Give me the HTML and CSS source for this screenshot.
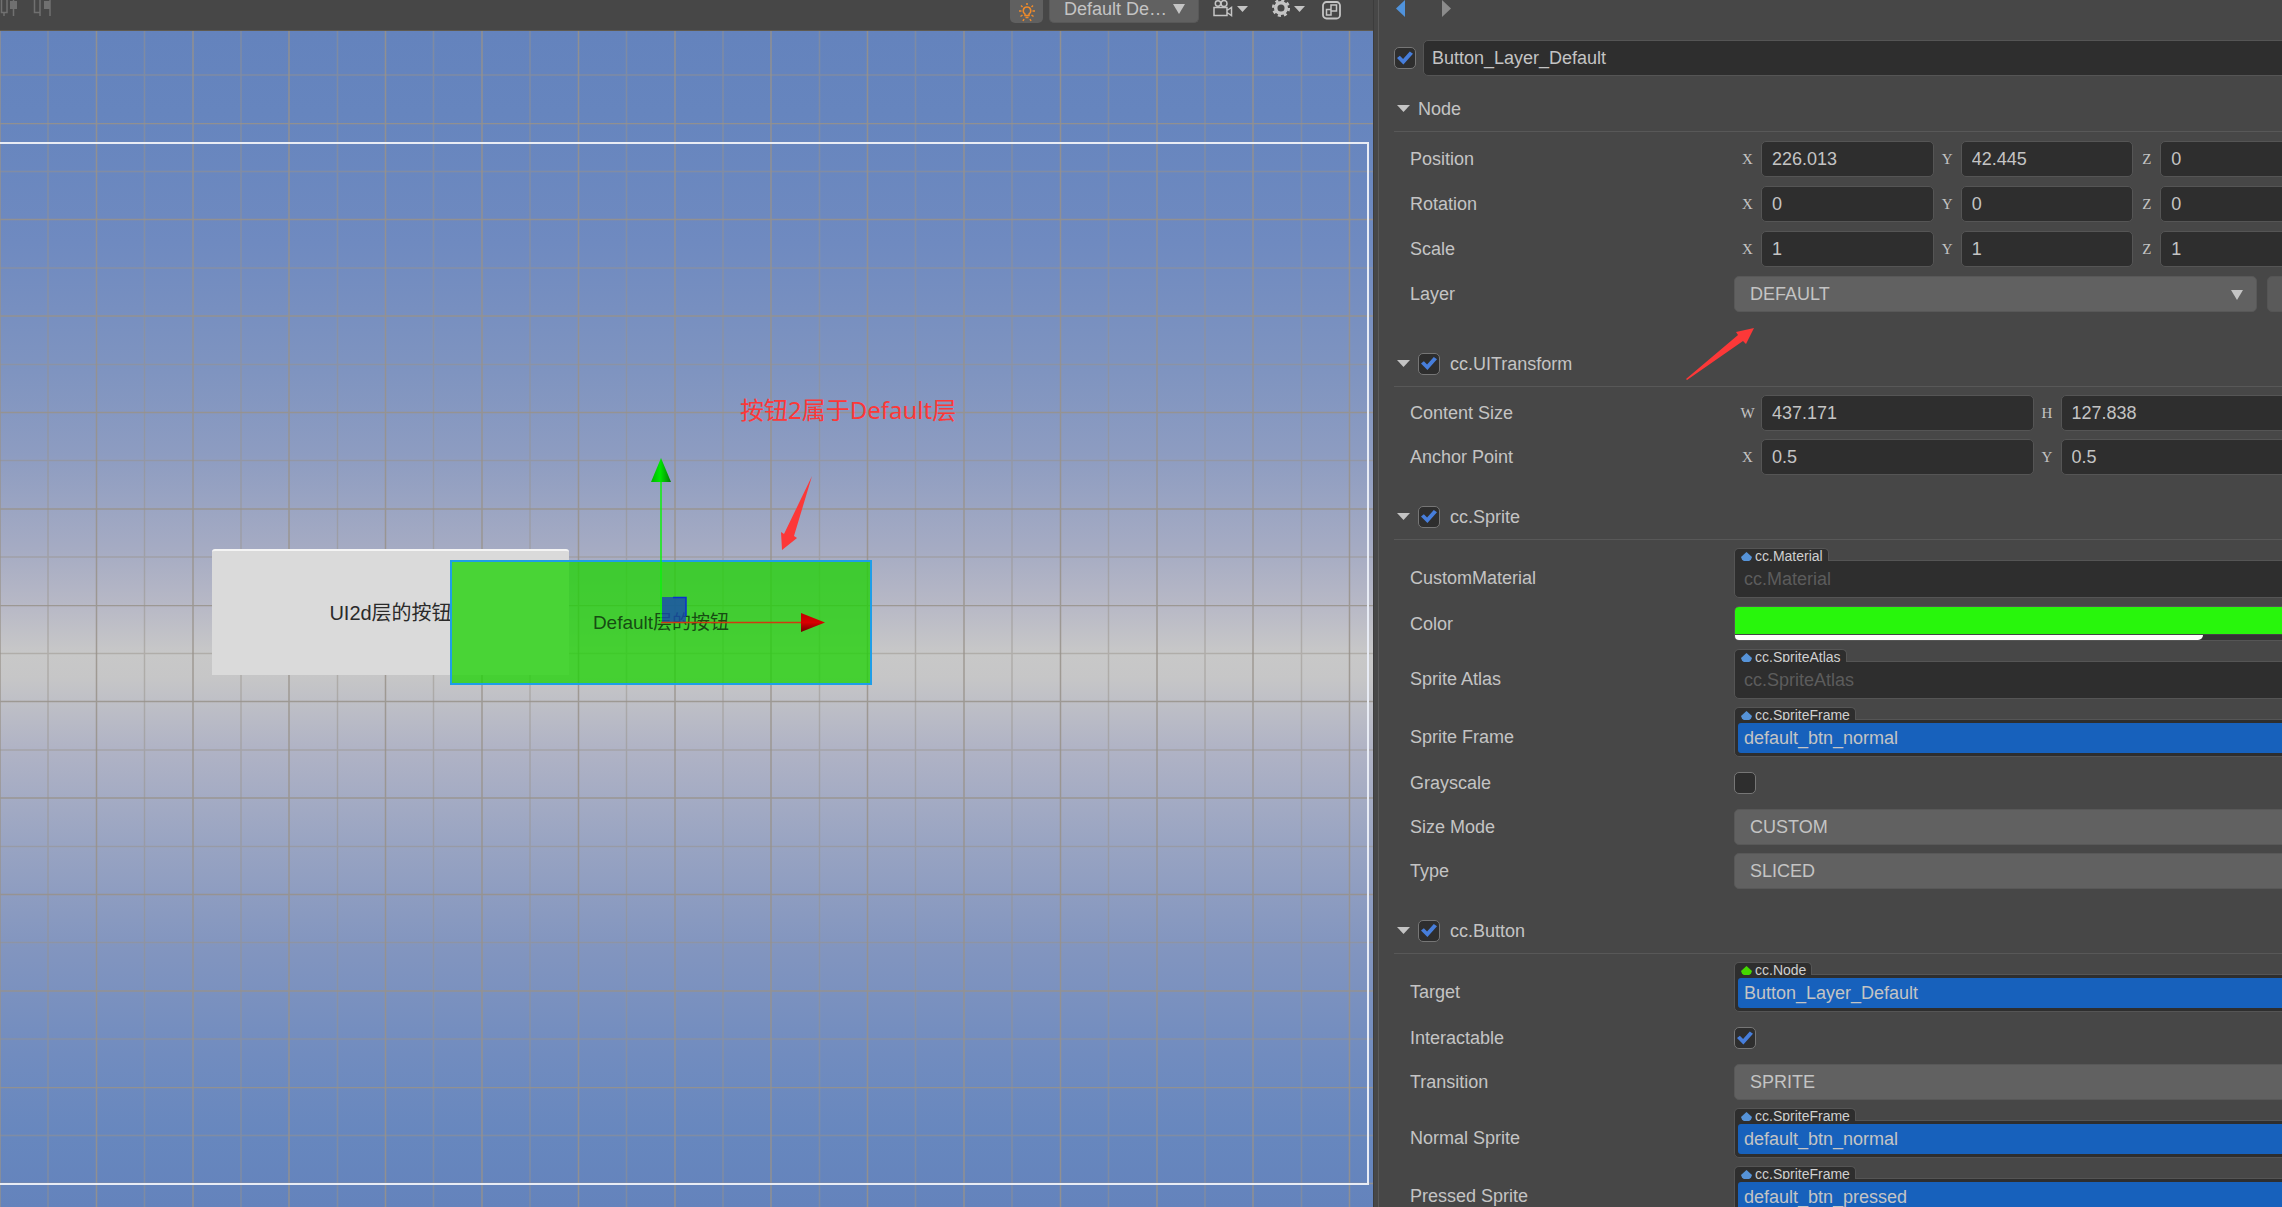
FILE: index.html
```html
<!DOCTYPE html>
<html lang="zh-CN">
<head>
<meta charset="utf-8">
<title>Scene Editor</title>
<link rel="stylesheet" href="styles.css">
</head>
<body>
<div class="app">
  <main class="scene">
    <div class="toolbar">
      <div class="tools">
        <button class="tool" aria-label="Align horizontal centers"><svg width="18" height="16"><path d="M1.500 0V12.500H7V0M4 12.500V16M13.500 0V16" fill="none" stroke="#707070" stroke-width="1.500"/><path d="M10 1h7v8h-7z" fill="#707070"/></svg></button>
        <button class="tool" aria-label="Align right"><svg width="18" height="16"><path d="M1.500 0V12.500H7M7 0V16M17 0V16" fill="none" stroke="#707070" stroke-width="1.500"/><path d="M11 1h6v8h-6z" fill="#707070"/></svg></button>
      </div>
      <div class="tools-right">
        <button class="tool light" aria-label="Scene light"><svg width="18" height="20" viewBox="0 0 18 20" fill="none" stroke="#ef8a2a" stroke-width="1.500"><path d="M7 13.500V12C4 10 5 5 9 5s5 5 2 7v1.500zM7.500 15.500h3M9 1v2M3 3.500l1.500 1.500M15 3.500L13.500 5M1 9h2.500M14.500 9H17M2.500 14.500L4.500 13M15.500 14.500l-2-1.500M6 17l-1 2M12 17l1 2"/></svg></button>
        <span class="drop drop-sm"><select class="select" aria-label="Design resolution"><option>Default De…</option></select></span>
        <button class="tool cam" aria-label="Camera"><svg width="20" height="17" fill="none" stroke="#c4c4c4" stroke-width="1.500"><circle cx="5" cy="3.500" r="2.700"/><circle cx="11" cy="3.500" r="3"/><path d="M1 7.500h13v8H1zM14 10.500l4.500-3v8l-4.500-3"/></svg><i class="caret"></i></button>
        <button class="tool gear" aria-label="Settings"><svg width="18" height="18"><circle cx="9" cy="8" r="5.300" fill="none" stroke="#c4c4c4" stroke-width="3.500"/><circle cx="9" cy="8" r="7.800" fill="none" stroke="#c4c4c4" stroke-width="2.500" stroke-dasharray="3.100 3.026"/></svg><i class="caret"></i></button>
        <button class="tool win" aria-label="Layout"><svg width="20" height="20" fill="none" stroke="#c4c4c4"><rect x="1" y="2" width="17" height="16.500" rx="3.500" stroke-width="1.800"/><path d="M9 5h5.500v6H9zM4.500 9.500H9v5.500H4.500z" stroke-width="1.500"/></svg></button>
      </div>
    </div>
    <div class="viewport">
      <svg class="grid" width="100%" height="100%">
        <defs>
          <pattern id="lines" y="92" width="482" height="482" patternUnits="userSpaceOnUse">
            <g fill="none" stroke="#98928a" stroke-width="1.500">
              <path stroke-opacity=".85" d="M0 0V482M482 0V482M96.500 0V482M193 0V482M289 0V482M385.500 0V482M0 .5H482M0 96.500H482M0 193H482M0 289.500H482M0 386H482"/>
              <path stroke-opacity=".5" d="M48 0V482M144.500 0V482M241 0V482M337.500 0V482M433.500 0V482M0 48.500H482M0 145H482M0 241.500H482M0 337.500H482M0 434H482"/>
            </g>
          </pattern>
        </defs>
        <rect width="100%" height="100%" fill="url(#lines)"/>
      </svg>
      <div class="canvas-frame"></div>
      <div class="node node-ui">UI2d层的按钮</div>
      <div class="node node-default"><span>Default层的按钮</span></div>
      <svg class="gizmo" width="180" height="180">
        <defs>
          <linearGradient id="gy"><stop offset="0" stop-color="#00b400"/><stop offset=".45" stop-color="#00e800"/><stop offset="1" stop-color="#067a06"/></linearGradient>
          <linearGradient id="gx" x2="0" y2="1"><stop offset="0" stop-color="#c00000"/><stop offset=".5" stop-color="#d80000"/><stop offset="1" stop-color="#700000"/></linearGradient>
        </defs>
        <path d="M12 141h24v25H12z" fill="#1848b0" fill-opacity=".8"/>
        <path d="M23 141.500h13V160" fill="none" stroke="#0a2fd0" stroke-width="1.500"/>
        <path d="M11 26V166" stroke="#0cf20c" stroke-width="1.500"/>
        <path d="M11 166.500H152" stroke="#d03a10" stroke-width="1.500"/>
        <path d="M11 2L21 26H1z" fill="url(#gy)"/>
        <path d="M175 166.500L151 157v19z" fill="url(#gx)"/>
      </svg>
      <p class="note">按钮2属于Default层</p>
      <svg class="pointer pointer-scene" width="34" height="76"><path d="M32 0L14 60 17 62 2 74 1 56 4 58z" fill="#fc3838"/></svg>
    </div>
  </main>
  <div class="splitter"></div>
  <aside class="inspector">
    <div class="nav">
      <button class="back" aria-label="Back"></button>
      <button class="next" aria-label="Forward"></button>
    </div>
    <form class="form">
      <div class="name">
        <input type="checkbox" class="check" aria-label="Active" checked>
        <input type="text" class="text" aria-label="Node name" value="Button_Layer_Default">
      </div>

      <section class="group first">
        <h2 class="head"><i class="caret"></i><span>Node</span></h2>
        <div class="row"><span class="label">Position</span><div class="axes three">
          <label>X<input type="text" class="text" value="226.013"></label><label>Y<input type="text" class="text" value="42.445"></label><label>Z<input type="text" class="text" value="0"></label></div></div>
        <div class="row"><span class="label">Rotation</span><div class="axes three">
          <label>X<input type="text" class="text" value="0"></label><label>Y<input type="text" class="text" value="0"></label><label>Z<input type="text" class="text" value="0"></label></div></div>
        <div class="row"><span class="label">Scale</span><div class="axes three">
          <label>X<input type="text" class="text" value="1"></label><label>Y<input type="text" class="text" value="1"></label><label>Z<input type="text" class="text" value="1"></label></div></div>
        <div class="row"><label class="label" for="layer">Layer</label><div class="layer">
          <span class="drop"><select class="select" id="layer"><option>DEFAULT</option></select></span>
          <button type="button" class="edit" aria-label="Edit layers"></button>
          <svg class="pointer pointer-layer" width="70" height="54"><path d="M68 1L50 5 52 8 0 52 1 53 57 14 60 17z" fill="#fc3838"/></svg></div></div>
      </section>

      <section class="group">
        <h2 class="head"><i class="caret"></i><input type="checkbox" class="check" id="c1" checked><label for="c1">cc.UITransform</label></h2>
        <div class="row"><span class="label">Content Size</span><div class="axes two">
          <label>W<input type="text" class="text" value="437.171"></label><label>H<input type="text" class="text" value="127.838"></label></div></div>
        <div class="row"><span class="label">Anchor Point</span><div class="axes two">
          <label>X<input type="text" class="text" value="0.5"></label><label>Y<input type="text" class="text" value="0.5"></label></div></div>
      </section>

      <section class="group">
        <h2 class="head"><i class="caret"></i><input type="checkbox" class="check" id="c2" checked><label for="c2">cc.Sprite</label></h2>
        <div class="row asset-row"><label class="label" for="mat">CustomMaterial</label><div class="asset"><span class="type">cc.Material</span><div class="slot"><input type="text" id="mat" placeholder="cc.Material"></div></div></div>
        <div class="row"><label class="label" for="color">Color</label><div class="color"><input type="color" id="color" value="#28f60c"><div class="alpha"><div style="width:78.4%"></div></div></div></div>
        <div class="row asset-row"><label class="label" for="atlas">Sprite Atlas</label><div class="asset"><span class="type">cc.SpriteAtlas</span><div class="slot"><input type="text" id="atlas" placeholder="cc.SpriteAtlas"></div></div></div>
        <div class="row asset-row"><label class="label" for="frame">Sprite Frame</label><div class="asset set"><span class="type">cc.SpriteFrame</span><div class="slot"><input type="text" id="frame" value="default_btn_normal"></div></div></div>
        <div class="row"><label class="label" for="gray">Grayscale</label><div><input type="checkbox" class="check" id="gray"></div></div>
        <div class="row"><label class="label" for="size">Size Mode</label><span class="drop"><select class="select" id="size"><option>CUSTOM</option></select></span></div>
        <div class="row"><label class="label" for="type">Type</label><span class="drop"><select class="select" id="type"><option>SLICED</option></select></span></div>
      </section>

      <section class="group">
        <h2 class="head"><i class="caret"></i><input type="checkbox" class="check" id="c3" checked><label for="c3">cc.Button</label></h2>
        <div class="row asset-row"><label class="label" for="target">Target</label><div class="asset set green"><span class="type">cc.Node</span><div class="slot"><input type="text" id="target" value="Button_Layer_Default"></div></div></div>
        <div class="row"><label class="label" for="inter">Interactable</label><div><input type="checkbox" class="check" id="inter" checked></div></div>
        <div class="row"><label class="label" for="trans">Transition</label><span class="drop"><select class="select" id="trans"><option>SPRITE</option></select></span></div>
        <div class="row asset-row"><label class="label" for="normal">Normal Sprite</label><div class="asset set"><span class="type">cc.SpriteFrame</span><div class="slot"><input type="text" id="normal" value="default_btn_normal"></div></div></div>
        <div class="row asset-row"><label class="label" for="pressed">Pressed Sprite</label><div class="asset set"><span class="type">cc.SpriteFrame</span><div class="slot"><input type="text" id="pressed" value="default_btn_pressed"></div></div></div>
      </section>
    </form>
  </aside>
</div>
</body>
</html>
```

FILE: styles.css
```css
* { box-sizing: border-box; }

body {
  margin: 0;
  background: #474747;
  color: #c4c4c4;
  font: 18px/20px "Liberation Sans", Arial, "Noto Sans CJK SC", sans-serif;
}

input, select, button { margin: 0; padding: 0; border: 0; font: inherit; color: inherit; }
button { background: none; }

.app {
  display: grid;
  grid-template-columns: minmax(0, 1373fr) 5px minmax(0, 904fr);
  height: 100vh;
  overflow: hidden;
}

.scene { display: flex; flex-direction: column; min-width: 0; }

/* toolbar */
.toolbar {
  display: flex;
  justify-content: space-between;
  align-items: flex-start;
  height: 31px;
  padding-right: 32px;
  border-bottom: 1px solid #5f5a50;
}
.tools { display: flex; gap: 15px; }
.tools-right { display: flex; align-items: flex-start; }
.tool { display: flex; align-items: flex-start; }
.tool svg { display: block; flex: none; }
.light {
  justify-content: center;
  width: 33px;
  height: 23px;
  padding-top: 2px;
  margin-right: 6px;
  border-radius: 0 0 5px 5px;
  background: #606060;
}
.drop-sm { width: 150px; margin-right: 14px; }
.cam { width: 33px; margin-right: 26px; }
.gear { width: 33px; margin-right: 17px; }
.win { width: 19px; }

.caret {
  flex: none;
  width: 13px;
  height: 7px;
  background: #c4c4c4;
  clip-path: polygon(0 0, 100% 0, 50% 100%);
}
.head .caret { margin-right: 1px; }
.tool .caret { width: 11px; height: 6px; margin: 6px 0 0 4px; }

/* scene view */
.viewport {
  position: relative;
  flex: 1;
  overflow: hidden;
  background: linear-gradient(#6483bd 0%, #6685be 7%, #6f8ac0 18%, #7f94c0 29%, #8d9cc1 36%, #a5abc3 44%, #b8b9c6 49%, #c8c8c8 53%, #c6c6c7 55%, #b0b3c5 61%, #99a4c2 69%, #8295bf 78%, #718cbf 87%, #6787be 94%, #6483bc 100%);
}
.grid { display: block; position: absolute; inset: 0; }
.canvas-frame {
  position: absolute;
  inset: 111px 4px 22px -2px;
  border: 2px solid #e8ecf5;
}
.node { position: absolute; display: flex; align-items: center; justify-content: center; }
.node-ui {
  left: 212px;
  top: 518px;
  width: 357px;
  height: 126px;
  border-top: 2px solid #f4f4f4;
  border-radius: 3px 3px 0 0;
  background: #dadada;
  color: #2a2a2a;
  font-size: 20px;
}
.node-default {
  left: 450px;
  top: 529px;
  width: 422px;
  height: 125px;
  border: 2px solid #1e9ee8;
  background: rgba(32, 210, 8, .78);
  color: rgba(10, 40, 10, .8);
  font-size: 19px;
}
.gizmo { position: absolute; left: 650px; top: 425px; }
.note {
  position: absolute;
  left: 740px;
  top: 361px;
  margin: 0;
  color: #fc3838;
  font: 24px/36px "Noto Sans", "Noto Sans CJK SC", sans-serif;
  white-space: nowrap;
}
.pointer { position: absolute; overflow: visible; }
.pointer-scene { left: 780px; top: 445px; }
.pointer-layer { left: -48px; top: 51px; }

.splitter { border-left: 1px solid #3c3c3c; }

/* inspector */
.inspector {
  min-width: 0;
  padding-left: 15px;
  border-left: 1px solid #5a5a5a;
  overflow: hidden;
}
.nav { display: flex; gap: 37px; height: 40px; padding-left: 2px; }
.back, .next { width: 9px; height: 17px; }
.back { background: #5093dc; clip-path: polygon(100% 0, 100% 100%, 0 50%); }
.next { background: #8c8c8c; clip-path: polygon(0 0, 100% 50%, 0 100%); }

/* the form is wider than the panel and runs under its right edge */
.form { width: calc(100% + 51px); }
.name { display: flex; align-items: center; gap: 7px; height: 36px; margin-bottom: 10px; }

.text {
  width: 100%;
  min-width: 0;
  height: 36px;
  padding: 0 10px;
  border: 1px solid #555;
  border-radius: 5px;
  background: #2e2e2e;
}
.name .text { padding: 0 8px; }

.check {
  appearance: none;
  display: block;
  flex: none;
  width: 22px;
  height: 22px;
  border: 1px solid #767676;
  border-radius: 5px;
  background: #2e2e2e;
}
.check:checked::before {
  content: "";
  display: block;
  width: 16px;
  height: 14px;
  margin: 3px 2px;
  background: #477edb;
  clip-path: polygon(0 50%, 18% 34%, 38% 58%, 80% 4%, 100% 20%, 40% 96%);
}

.group { display: grid; gap: 8px; margin-bottom: 19px; }
.first { gap: 9px; margin-bottom: 29px; }
.head {
  display: flex;
  align-items: center;
  height: 46px;
  margin: 0;
  padding-left: 3px;
  border-bottom: 1px solid #585858;
  font: inherit;
}
.head .check { margin: 0 10px 0 7px; }
.head span { margin-left: 7px; }

.row {
  position: relative;
  display: grid;
  grid-template-columns: 340fr 599fr;
  align-items: center;
  min-height: 36px;
}
.row:has(.color) { min-height: 35px; }
.label { padding-left: 16px; }
.asset-row .label { padding-top: 9px; }

.axes { display: grid; }
.three { grid-template-columns: repeat(3, 1fr); }
.two { grid-template-columns: repeat(2, 1fr); }
.axes label {
  display: grid;
  grid-template-columns: 27px 1fr;
  align-items: center;
  font: 15px/20px "Liberation Serif", "Times New Roman", serif;
  text-align: center;
}
.axes .text { font: 18px/20px "Liberation Sans", Arial, sans-serif; }

.drop { display: block; position: relative; }
.drop::after {
  content: "";
  position: absolute;
  top: 14px;
  right: 14px;
  width: 12px;
  height: 10px;
  background: #c4c4c4;
  clip-path: polygon(0 0, 100% 0, 50% 100%);
  pointer-events: none;
}
.select {
  appearance: none;
  display: block;
  width: 100%;
  height: 36px;
  padding: 0 15px;
  border: 1px solid #585858;
  border-radius: 5px;
  background: #616161;
}
.drop-sm .select { height: 23px; padding: 0 0 4px 14px; border-top: 0; border-radius: 0 0 5px 5px; line-height: 18px; }
.drop-sm::after { top: 4px; }

.layer { position: relative; display: grid; grid-template-columns: 1fr 66px; gap: 10px; }
.edit { border: 1px solid #555; border-radius: 5px; background: #5a5a5a; }

.asset { display: flex; flex-direction: column; align-items: flex-start; height: 50px; }
.type {
  position: relative;
  z-index: 1;
  display: flex;
  align-items: flex-start;
  gap: 3px;
  height: 13px;
  margin-bottom: -1px;
  padding: 0 5px 0 6px;
  border: 1px solid #555;
  border-bottom: 0;
  border-radius: 5px 5px 0 0;
  background: #2e2e2e;
  color: #d0d0d0;
  font-size: 14px;
  line-height: 15px;
  overflow: hidden;
}
.type::before {
  content: "";
  width: 11px;
  height: 11px;
  margin-top: 3px;
  background: #5693d8;
  clip-path: polygon(50% 0, 100% 45%, 90% 70%, 50% 100%, 10% 70%, 0 45%);
}
.green .type::before { background: #44d800; }
.slot {
  width: 100%;
  height: 38px;
  padding: 3px;
  border: 1px solid #555;
  border-radius: 0 5px 5px 5px;
  background: #2e2e2e;
}
.slot input {
  display: block;
  width: 100%;
  height: 30px;
  padding: 0 6px;
  border-radius: 3px;
  background: transparent;
}
.slot input::placeholder { color: #5c5c5c; }
.set .slot input { background: #1761bc; }

.color {
  height: 35px;
  border: 1px solid #555;
  border-radius: 5px;
  background: #333;
  overflow: hidden;
}
.color input { appearance: none; display: block; width: 100%; height: 28px; border-bottom: 1px solid #444; background: none; }
.color input::-webkit-color-swatch-wrapper { padding: 0; }
.color input::-webkit-color-swatch { border: 0; border-radius: 0; }
.alpha { height: 5px; }
.alpha div { height: 5px; border-radius: 0 0 5px 0; background: #fff; }
```
